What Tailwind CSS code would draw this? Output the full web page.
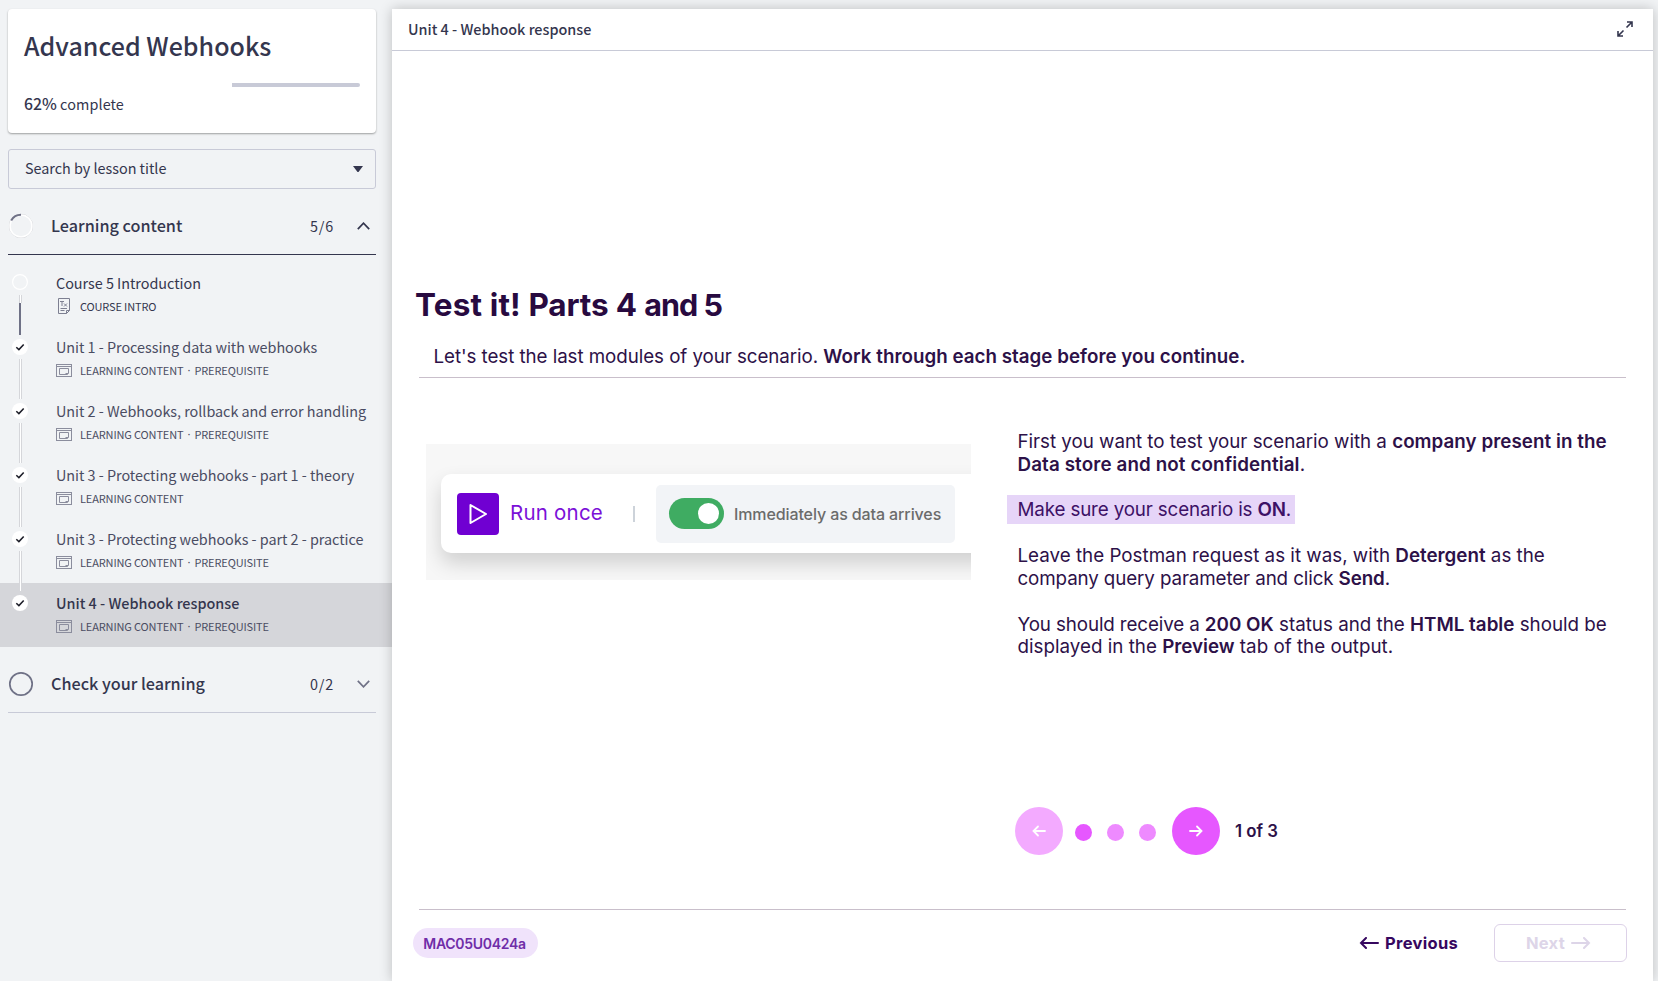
<!DOCTYPE html>
<html lang="en">
<head>
<meta charset="utf-8">
<title>Advanced Webhooks</title>
<script src="https://cdn.jsdelivr.net/npm/@tailwindcss/browser@4"></script>
</head>
<body class="w-[1658px] h-[981px] overflow-hidden bg-[#f1f3f5] text-[#34364e] font-['Noto_Sans_CJK_SC',sans-serif]">
<svg class="hidden">
  <symbol id="check" viewBox="0 0 16 16"><circle cx="8" cy="8" r="8" fill="#fff"/><path d="M4.3 8.2 6.9 10.6 11.7 5.4" fill="none" stroke="#1c1d28" stroke-width="1.5"/></symbol>
  <symbol id="lesson" viewBox="0 0 16 13"><g fill="none" stroke="#8b8d9d" stroke-width="1"><rect x=".5" y=".5" width="15" height="12"/><path d="M.5 2.5H15.5M3.500 4.500H12.500V9.500L11.500 10.500H3.500ZM9.500 9.500H12"/></g></symbol>
</svg>
<div class="flex h-full">
  <aside class="w-[392px] shrink-0 pt-[9px]">
    <section class="ml-2 w-[368px] h-[124px] rounded bg-white px-4 pt-[18px] shadow-[0_1px_2px_rgba(0,0,0,0.35)]">
      <h1 class="h-[40px] leading-[36px] text-[25px] font-medium whitespace-nowrap tracking-[0.02px]">Advanced Webhooks</h1>
      <div class="mt-[16px] flex h-1 justify-end"><div class="h-1 w-[128px] rounded-r-sm bg-[#c8cad7]"></div></div>
      <div class="mt-[5px] text-[14.4px] leading-[24px] whitespace-nowrap"><b class="text-[15.8px] font-medium">62%</b> <span class="tracking-[0.1px]">complete</span></div>
    </section>
    <div class="ml-2 mt-4 flex h-10 w-[368px] items-center justify-between rounded-[3px] border border-[#c8cad7] pl-4 pr-3 pb-[2px] text-[14.4px] leading-[24px]">
      <span class="tracking-[-0.02px]">Search by lesson title</span>
      <svg class="mt-px h-[6px] w-[10px]" viewBox="0 0 10 6"><path d="M0 0H10L5.5 6H4.5Z" fill="#34364e"/></svg>
    </div>
    <div class="ml-2 mt-[10px] flex h-[56px] w-[368px] items-center border-b border-[#34364e] pr-[6px] pb-px">
      <svg class="size-[26px]" viewBox="0 0 26 26"><circle cx="13" cy="13" r="11.6" fill="none" stroke="#c9cacf" stroke-width="1"/><circle cx="13" cy="13" r="11" fill="none" stroke="#fff" stroke-width="1.6"/><path d="M3.2 7.6A11.2 11.2 0 0 1 13 1.8" fill="none" stroke="#6f7186" stroke-width="2"/></svg>
      <span class="ml-[17px] pb-[2px] text-[16.2px] font-medium whitespace-nowrap">Learning content</span>
      <span class="ml-auto pb-px text-[14.4px] tracking-[0.8px]">5/6</span>
      <svg class="ml-[23px] h-[8px] w-[13px]" viewBox="0 0 13 8"><path d="M.8 7.2 6.5 1.2 12.2 7.2" fill="none" stroke="#34364e" stroke-width="1.7"/></svg>
    </div>
    <ol class="mt-2 text-[14.4px] tracking-[-0.03px] whitespace-nowrap">
      <li class="flex h-16 text-[#34364e]">
        <div class="ml-3 w-4 pt-[11px]"><svg class="size-4" viewBox="0 0 16 16"><circle cx="8" cy="8" r="7.4" fill="none" stroke="#fff" stroke-width="1.2"/></svg><div class="ml-[7px] mt-[5px] h-[8px] w-[3px] border-x border-[#d5d6da] bg-white"></div><div class="ml-[7px] h-[32px] w-[2px] bg-[#6f7186]"></div></div>
        <div class="ml-[28px] pt-[8px]"><div class="h-[24px] leading-[24px] tracking-[-0.03px]">Course 5 Introduction</div>
        <div class="mt-[2px] flex h-[18px] items-center text-[11px] tracking-[-0.14px]"><svg class="ml-[1px] mr-[9px] h-[17px] w-[14px]" viewBox="0 0 14 17"><g fill="none" stroke="#7d7f91"><path d="M1.5 .5H12.500V12.500L9.500 15.500H1.500ZM9.500 15.500V12.500H12.500M3 3.500H7M5 3.500V8M7 5.500 10 8.500M10 5.500 7 8.500M3.500 10.500H10M3.500 12.500H7.500"/></g></svg>COURSE INTRO</div></div>
      </li>
      <li class="flex h-16 text-[#4a4c62]">
        <div class="ml-3 w-4 pt-3"><svg class="size-4"><use href="#check"/></svg><div class="ml-[7px] mt-1 h-[40px] w-[3px] border-x border-[#d5d6da] bg-white"></div></div>
        <div class="ml-[28px] pt-[8px]"><div class="h-[24px] leading-[24px]">Unit 1 - Processing data with webhooks</div>
        <div class="mt-[2px] flex h-[18px] items-center text-[11px] tracking-[-0.14px]"><svg class="mr-2 h-[13px] w-4"><use href="#lesson"/></svg>LEARNING CONTENT<span class="w-[11px] text-center font-['Noto_Sans']">·</span>PREREQUISITE</div></div>
      </li>
      <li class="flex h-16 text-[#4a4c62]">
        <div class="ml-3 w-4 pt-3"><svg class="size-4"><use href="#check"/></svg><div class="ml-[7px] mt-1 h-[40px] w-[3px] border-x border-[#d5d6da] bg-white"></div></div>
        <div class="ml-[28px] pt-[8px]"><div class="h-[24px] leading-[24px]">Unit 2 - Webhooks, rollback and error handling</div>
        <div class="mt-[2px] flex h-[18px] items-center text-[11px] tracking-[-0.14px]"><svg class="mr-2 h-[13px] w-4"><use href="#lesson"/></svg>LEARNING CONTENT<span class="w-[11px] text-center font-['Noto_Sans']">·</span>PREREQUISITE</div></div>
      </li>
      <li class="flex h-16 text-[#4a4c62]">
        <div class="ml-3 w-4 pt-3"><svg class="size-4"><use href="#check"/></svg><div class="ml-[7px] mt-1 h-[40px] w-[3px] border-x border-[#d5d6da] bg-white"></div></div>
        <div class="ml-[28px] pt-[8px]"><div class="h-[24px] leading-[24px]">Unit 3 - Protecting webhooks - part 1 - theory</div>
        <div class="mt-[2px] flex h-[18px] items-center text-[11px] tracking-[-0.14px]"><svg class="mr-2 h-[13px] w-4"><use href="#lesson"/></svg>LEARNING CONTENT</div></div>
      </li>
      <li class="flex h-16 text-[#4a4c62]">
        <div class="z-10 ml-3 w-4 pt-3"><svg class="size-4"><use href="#check"/></svg><div class="ml-[7px] mt-1 h-[40px] w-[3px] border-x border-[#d5d6da] bg-white"></div></div>
        <div class="ml-[28px] pt-[8px]"><div class="h-[24px] leading-[24px]">Unit 3 - Protecting webhooks - part 2 - practice</div>
        <div class="mt-[2px] flex h-[18px] items-center text-[11px] tracking-[-0.14px]"><svg class="mr-2 h-[13px] w-4"><use href="#lesson"/></svg>LEARNING CONTENT<span class="w-[11px] text-center font-['Noto_Sans']">·</span>PREREQUISITE</div></div>
      </li>
      <li class="flex h-16 bg-[#d5d6da] text-[#4a4c62]">
        <div class="ml-3 w-4 pt-3"><svg class="size-4"><use href="#check"/></svg></div>
        <div class="ml-[28px] pt-[8px]"><div class="h-[24px] leading-[24px] font-medium text-[#34364e] tracking-normal">Unit 4 - Webhook response</div>
        <div class="mt-[2px] flex h-[18px] items-center text-[11px] tracking-[-0.14px]"><svg class="mr-2 h-[13px] w-4"><use href="#lesson"/></svg>LEARNING CONTENT<span class="w-[11px] text-center font-['Noto_Sans']">·</span>PREREQUISITE</div></div>
      </li>
    </ol>
    <div class="ml-2 mt-[9px] flex h-[57px] w-[368px] items-center border-b border-[#c8cad7] pr-[6px]">
      <svg class="size-[26px]" viewBox="0 0 26 26"><circle cx="13" cy="13" r="11.2" fill="none" stroke="#6f7186" stroke-width="1.7"/></svg>
      <span class="ml-[17px] pb-[2px] text-[16.2px] font-medium whitespace-nowrap">Check your learning</span>
      <span class="ml-auto text-[14.4px] tracking-[0.8px]">0/2</span>
      <svg class="ml-[23px] h-[8px] w-[13px]" viewBox="0 0 13 8"><path d="M.8 .8 6.500 6.800 12.200 .8" fill="none" stroke="#6f7186" stroke-width="1.7"/></svg>
    </div>
  </aside>
  <main class="mt-[9px] h-[972px] w-[1261px] shrink-0 bg-white shadow-[0_0_12px_rgba(0,0,0,0.22)] text-[#2d1148] font-[Inter,sans-serif]">
    <header class="flex h-[42px] items-center justify-between border-b border-[#c8cad7] pl-4 pr-5 pb-[2px] text-[14.4px] font-medium text-[#34364e] font-['Noto_Sans_CJK_SC',sans-serif]">
      <span>Unit 4 - Webhook response</span>
      <svg class="size-4" viewBox="0 0 16 16"><path d="M10 1H15V6M15 1 9.500 6.500M6 15H1V10M1 15 6.500 9.500" fill="none" stroke="#34364e" stroke-width="1.6"/></svg>
    </header>
    <div class="ml-[27px] w-[1207px] border-b border-[#c9bfcb] pt-[231px] h-[327px] whitespace-nowrap">
      <h2 class="-ml-[4px] h-[46px] text-[31.500px] leading-[46px] font-bold text-[#280a40]"><span class="tracking-[0.15px]">Test it! </span><span class="tracking-[-0.15px]">Parts 4 </span><span class="text-[30.500px] tracking-[-0.95px]">and 5</span></h2>
      <p class="ml-[14.500px] mt-[17px] h-[24px] text-[18.750px] leading-[24px]"><span class="tracking-[-0.06px]">Let's test the last modules of your scenario. </span><b class="font-semibold tracking-[0.03px]">Work through each stage before you continue.</b></p>
    </div>
    <div class="flex h-[531px] pl-[34px]">
      <div class="mt-[66px] h-[136px] w-[545px] overflow-hidden bg-[#f7f7f7] pl-[15px] pt-[30px]">
        <div class="flex h-[79px] w-[600px] items-center rounded-[10px] bg-white pl-[16px] shadow-[0_10px_20px_rgba(0,0,0,0.16)]">
          <div class="grid h-[42px] w-[42px] place-items-center rounded bg-[#7000d2]"><svg class="h-[22px] w-5" viewBox="0 0 20 22"><path d="M2.500 2 18 11 2.500 20Z" fill="none" stroke="#fff" stroke-width="2" stroke-linejoin="round"/></svg></div>
          <span class="ml-[11px] w-[94px] text-[20.500px] tracking-[0.22px] text-[#7b10d8] whitespace-nowrap">Run once</span>
          <div class="ml-[29px] h-4 w-[2px] bg-[#cdd3da]"></div>
          <div class="ml-[21px] flex h-[58px] w-[299px] items-center rounded-[5px] bg-[#f2f4f7] pl-[13px]">
            <div class="flex h-[31px] w-[55px] items-center justify-end rounded-full bg-[#3fac62] pr-[5px]"><div class="size-[21px] rounded-full bg-white"></div></div>
            <span class="ml-[10px] text-[16px] font-medium tracking-[-0.11px] text-[#6b6b6b] whitespace-nowrap">Immediately as data arrives</span>
          </div>
        </div>
      </div>
      <div class="ml-[46.500px] pt-[52px] text-[18.800px] leading-[23px] whitespace-nowrap">
        <p><span class="tracking-[-0.03px]">First you want to test your scenario with a </span><b class="font-semibold tracking-[0.05px]">company present in the</b></p>
        <p><b class="font-semibold tracking-[0.12px]">Data store and not confidential</b>.</p>
        <p class="-ml-[10.500px] mt-[19px] flex h-[29px] w-[288px] items-center bg-[#e6d5f8] pl-[10.500px] text-[#3d1166]"><span class="tracking-[-0.15px]">Make sure your scenario is <b class="font-semibold">ON</b>.</span></p>
        <p class="mt-[20px]">Leave the Postman request as it was, with <b class="font-semibold">Detergent</b> as the</p>
        <p class="tracking-[-0.12px]">company query parameter and click <b class="font-semibold">Send</b>.</p>
        <p class="mt-[23px]"><span class="tracking-[-0.12px]">You should receive a </span><b class="font-semibold">200 OK</b> status and the <b class="font-semibold">HTML table</b> should be</p>
        <p class="leading-[22px]">displayed in the <b class="font-semibold">Preview</b> tab of the output.</p>
        <div class="mt-[149px] flex items-center -ml-[2.500px]">
          <div class="grid size-12 place-items-center rounded-full bg-[#f3aaff]"><svg class="h-3 w-[14px]" viewBox="0 0 14 12"><path d="M13 6H1.500M6 1.500 1.500 6 6 10.500" fill="none" stroke="#fff" stroke-width="1.800" stroke-linecap="round"/></svg></div>
          <div class="ml-3 mt-[2px] flex gap-[15px]"><div class="size-[17px] rounded-full bg-[#e657ff]"></div><div class="size-[17px] rounded-full bg-[#ee8aff]"></div><div class="size-[17px] rounded-full bg-[#ee8aff]"></div></div>
          <div class="ml-[15.500px] grid size-12 place-items-center rounded-full bg-[#e657ff]"><svg class="h-3 w-[14px]" viewBox="0 0 14 12"><path d="M1 6H12.500M8 1.500 12.500 6 8 10.500" fill="none" stroke="#fff" stroke-width="1.800" stroke-linecap="round"/></svg></div>
          <span class="ml-[15.500px] text-[16.800px] font-semibold">1 of 3</span>
        </div>
      </div>
    </div>
    <div class="ml-[27px] h-px w-[1207px] bg-[#c9bfcb]"></div>
    <footer class="ml-[21px] flex h-[66px] w-[1214px] items-center">
      <span class="flex h-[30px] w-[125px] items-center justify-center rounded-full bg-[#f0e3fb] pr-[2px] text-[14px] font-semibold tracking-[-0.3px] text-[#6f2da8]">MAC05U0424a</span>
      <svg class="ml-auto h-3 w-5" viewBox="0 0 20 12"><path d="M19 6H2M7 1 2 6 7 11" fill="none" stroke="#36075f" stroke-width="2" stroke-linecap="round"/></svg>
      <span class="ml-[6px] text-[16.500px] font-bold tracking-[0.3px] text-[#36075f]">Previous</span>
      <span class="ml-[36px] flex h-[38px] w-[133px] items-center rounded-md border border-[#ddd2e8] pl-[31px] text-[16.500px] font-bold tracking-[0.25px] text-[#ddd5e8]">Next<svg class="ml-[6px] h-3 w-5" viewBox="0 0 20 12"><path d="M1 6H18M13 1 18 6 13 11" fill="none" stroke="#ddd5e8" stroke-width="2" stroke-linecap="round"/></svg></span>
    </footer>
  </main>
</div>
</body>
</html>
